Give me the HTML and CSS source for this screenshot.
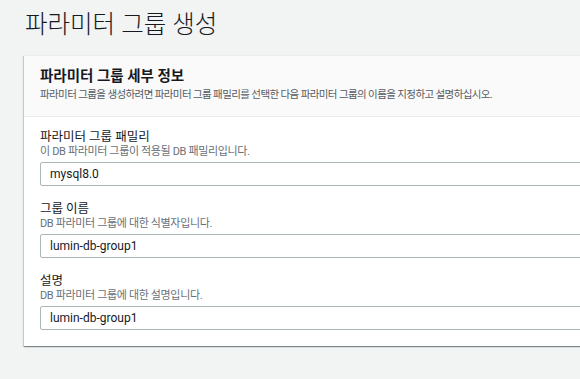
FILE: index.html
```html
<!DOCTYPE html>
<html lang="ko">
<head>
    <meta charset="UTF-8">
    <meta name="viewport" content="width=device-width, initial-scale=1.0">
    <title>파라미터 그룹 생성</title>
    <link rel="stylesheet" href="styles.css">
</head>
<body>
    <div class="page">
        <h1 class="page-title">파라미터 그룹 생성</h1>

        <section class="card">
            <div class="card-header">
                <h2 class="card-title">파라미터 그룹 세부 정보</h2>
                <p class="card-desc">파라미터 그룹을 생성하려면 파라미터 그룹 패밀리를 선택한 다음 파라미터 그룹의 이름을 지정하고 설명하십시오.</p>
            </div>
            <div class="card-body">
                <div class="field">
                    <label class="field-label">파라미터 그룹 패밀리</label>
                    <div class="field-desc">이 DB 파라미터 그룹이 적용될 DB 패밀리입니다.</div>
                    <div class="field-input">mysql8.0</div>
                </div>
                <div class="field">
                    <label class="field-label">그룹 이름</label>
                    <div class="field-desc">DB 파라미터 그룹에 대한 식별자입니다.</div>
                    <div class="field-input">lumin-db-group1</div>
                </div>
                <div class="field">
                    <label class="field-label">설명</label>
                    <div class="field-desc">DB 파라미터 그룹에 대한 설명입니다.</div>
                    <div class="field-input">lumin-db-group1</div>
                </div>
            </div>
        </section>
    </div>
</body>
</html>
```

FILE: styles.css
```css
*{
    box-sizing: border-box;
}
html,
body {
    margin: 0;
    padding: 0;
    height: 100%;
    background-color: #f2f3f3;
    font-family: Roboto, "Noto Sans CJK KR", sans-serif;
    color: #16191f;
    overflow: hidden;
}
.page {
    padding: 10px 0 0 24px;
}
.page-title {
    margin: 0;
    font-size: 24.5px;
    line-height: 30px;
    font-weight: 300;
    padding-left: 1px;
}

.card {
    margin-top: 15px;
    width: 620px;
    background-color: #fff;
    border-top: 1px solid #eaeded;
    box-shadow: 0 1px 1px 0 rgba(0,28,36,.3), 1px 1px 1px 0 rgba(0,28,36,.15), -1px 1px 1px 0 rgba(0,28,36,.15);
}
.card-header {
    background-color: #fafafa;
    border-bottom: 1px solid #eaeded;
    padding: 11px 16px 13px;
}
.card-title {
    margin: 0;
    font-size: 14.5px;
    line-height: 20px;
    font-weight: 700;
}
.card-desc {
    margin: 0;
    font-size: 10.5px;
    letter-spacing: -0.6px;
    line-height: 16px;
    color: #545b64;
}

.card-body {
    padding: 12px 16px 16px;
    display: flex;
    flex-direction: column;
    gap: 15px;
}
.field {
    display: flex;
    flex-direction: column;
}
.field-label {
    font-size: 12.5px;
    line-height: 16px;
}
.field-desc {
    font-size: 11px;
    letter-spacing: -0.35px;
    line-height: 14px;
    color: #687078;
}
.field-input {
    margin-top: 3px;
    height: 24px;
    border: 1px solid #aab7b8;
    border-radius: 2px;
    padding: 0 9px;
    font-size: 12px;
    line-height: 22px;
}
```
